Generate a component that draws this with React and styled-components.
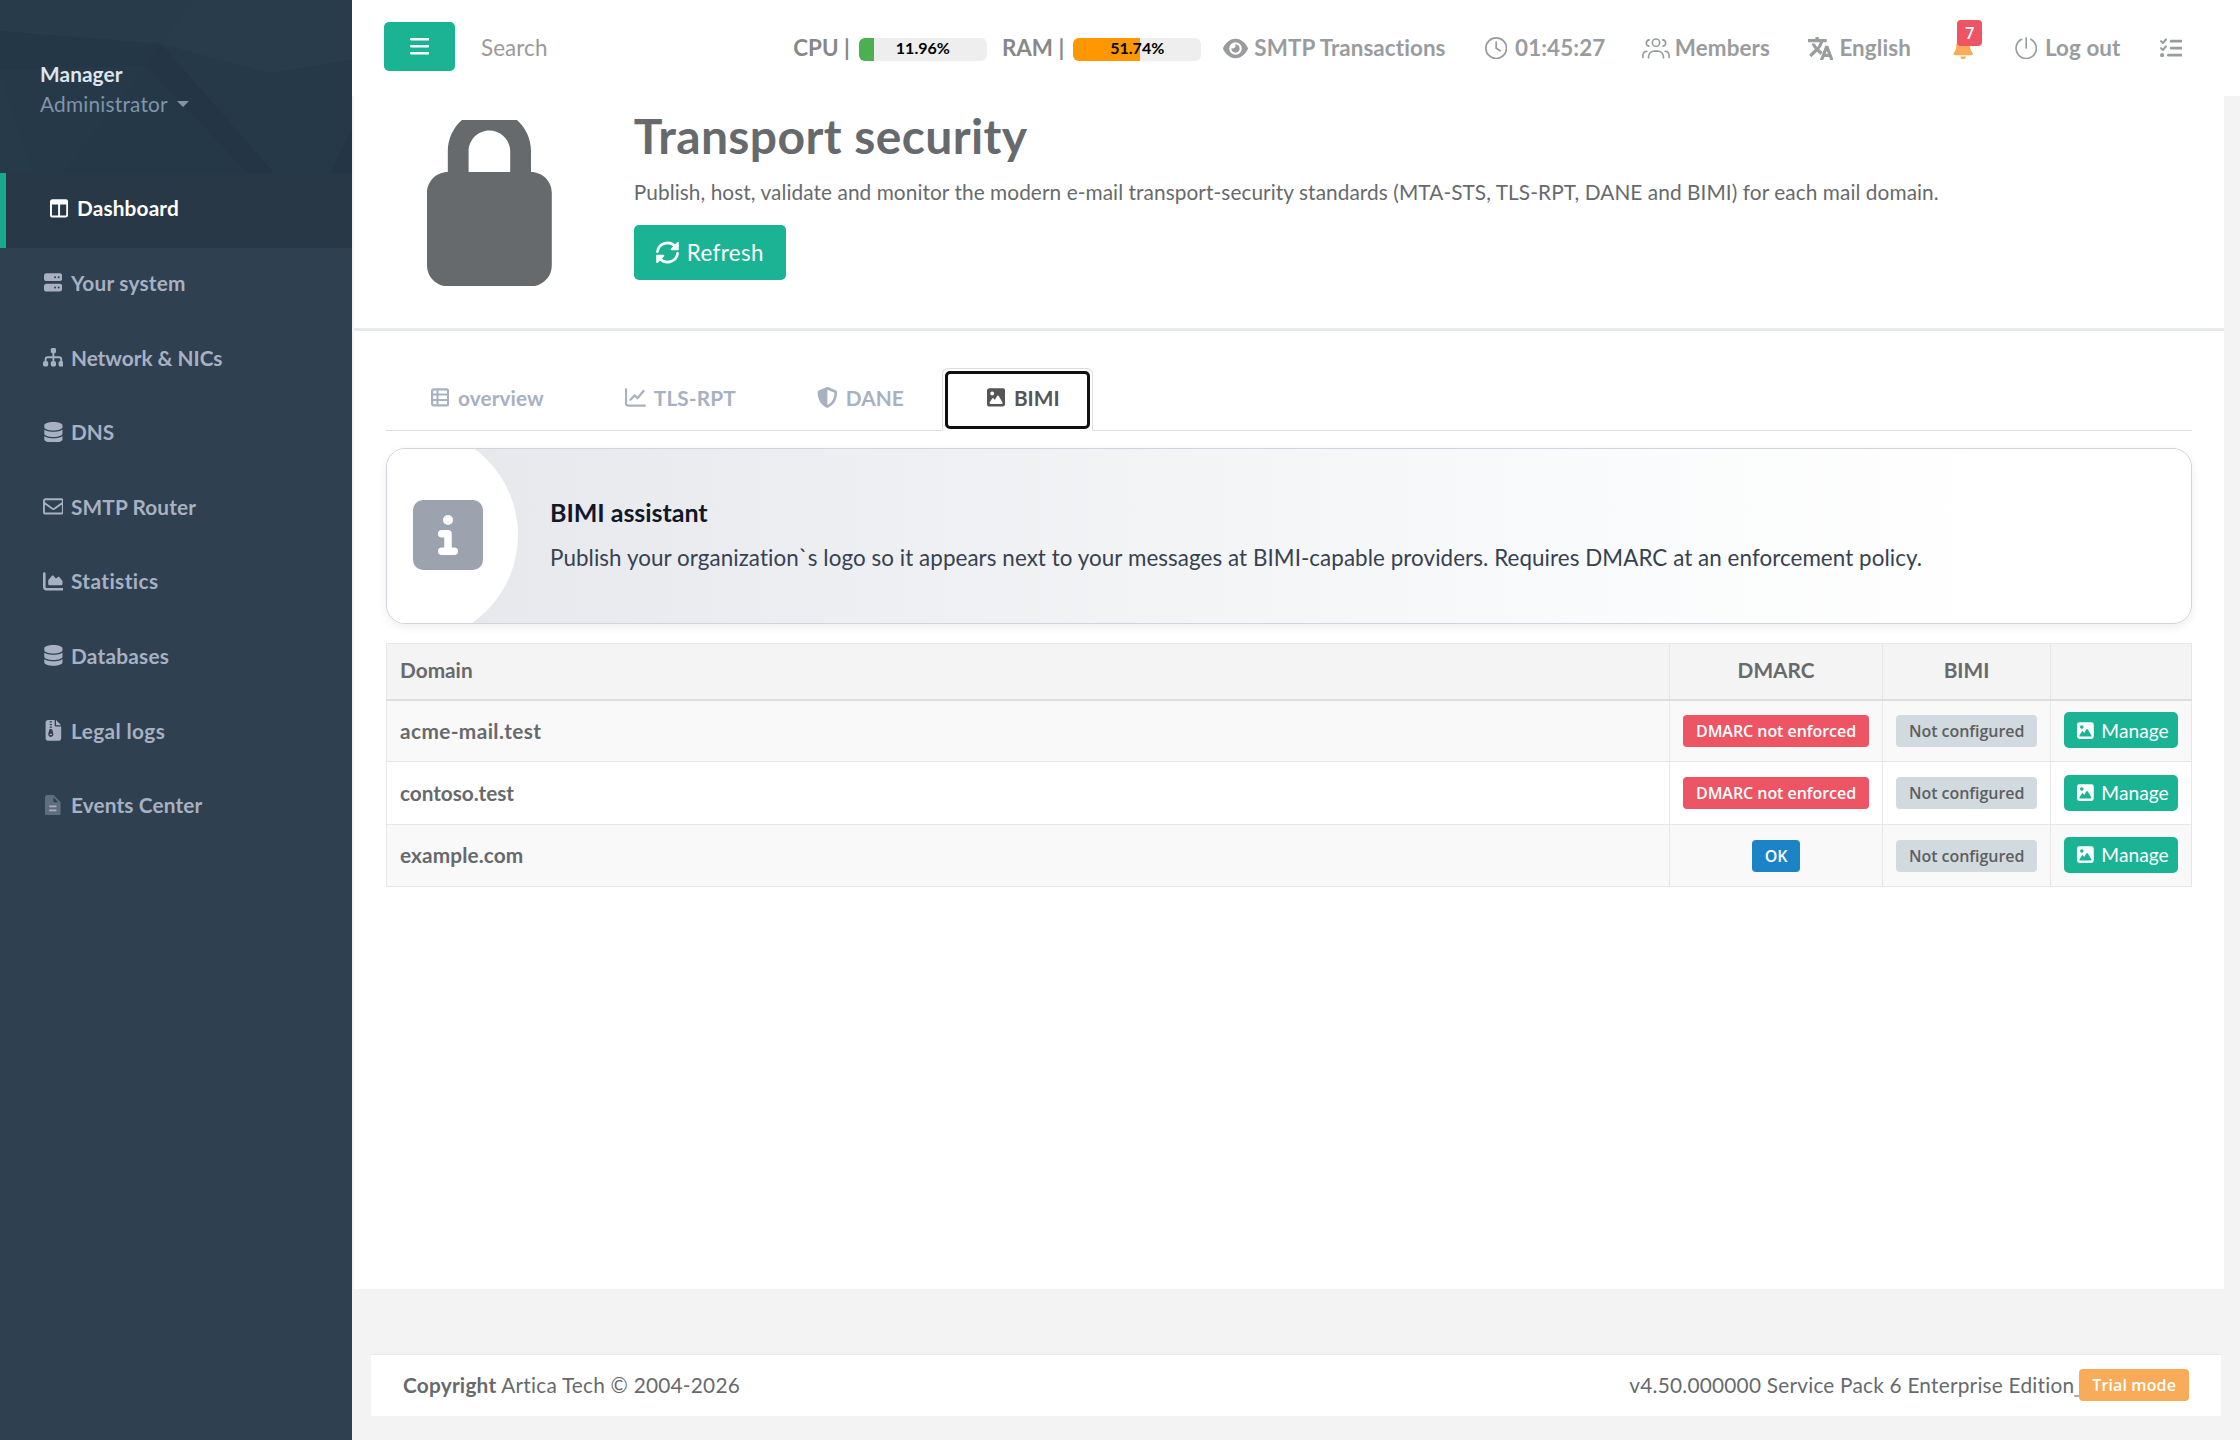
import React from 'react';
import styled, { createGlobalStyle } from 'styled-components';
import {
  FaBell,
  FaChartArea,
  FaDatabase,
  FaEye,
  FaFileZipper,
  FaListCheck,
  FaShieldHalved,
} from 'react-icons/fa6';

const GlobalStyle = createGlobalStyle`
  *, *::before, *::after {
    box-sizing: border-box;
  }

  body {
    margin: 0;
    background: #f3f3f3;
    color: #676a6c;
    font-family: Lato, "Open Sans", sans-serif;
    font-size: 20.8px;
    font-variant-ligatures: none;
    line-height: 1.42857;
  }
`;

const Page = styled.div`
  display: flex;
  width: 2240px;
  height: 1440px;
  overflow: hidden;
`;

/* ---------- sidebar ---------- */

const Sidebar = styled.nav`
  width: 352px;
  flex: none;
  background: #2f4050;
`;

const Profile = styled.div`
  position: relative;
  height: 173px;
  padding: 59px 40px 0;
  background: #263949;
`;

const ProfilePattern = styled.svg`
  position: absolute;
  inset: 0;
  width: 100%;
  height: 100%;
`;

const ProfileName = styled.div`
  position: relative;
  color: #dfe4ed;
  font-weight: 700;
  letter-spacing: 0.1px;
  line-height: 30px;
`;

const ProfileRole = styled.div`
  position: relative;
  display: flex;
  align-items: center;
  gap: 9px;
  color: #8095a8;
  letter-spacing: 0.22px;
  line-height: 30px;
`;

const Caret = styled.span`
  border-top: 6.4px solid currentColor;
  border-left: 6.4px solid transparent;
  border-right: 6.4px solid transparent;
`;

const NavItem = styled.a`
  display: flex;
  align-items: center;
  gap: 5px;
  height: 74.6px;
  padding: 0 0 4px 40px;
  border-left: ${(p) => (p.$active ? '6px solid #19aa8d' : 'none')};
  background: ${(p) => (p.$active ? '#293846' : 'transparent')};
  color: ${(p) => (p.$active ? '#fff' : '#a7b1c2')};
  font-weight: 700;
  letter-spacing: ${(p) => p.$tracking || 0}px;
`;

const IconBox = styled.span`
  display: inline-flex;
  flex: none;
  align-items: center;
  justify-content: center;
  width: 1.25em;
  height: 1em;
`;

/* ---------- top bar ---------- */

const Main = styled.div`
  flex: 1;
  min-width: 0;
  display: flex;
  flex-direction: column;
`;

const TopBar = styled.header`
  display: flex;
  align-items: center;
  height: 96px;
  flex: none;
  padding: 0 55px 0 32px;
  background: #fff;
  font-size: 22.4px;
`;

const MenuButton = styled.button`
  display: flex;
  align-items: center;
  justify-content: center;
  width: 71px;
  height: 49px;
  margin-top: -3px;
  padding: 0;
  border: 0;
  border-radius: 5px;
  background: #1ab394;
  color: #fff;
`;

const Search = styled.div`
  margin-left: 26px;
  color: #999;
  letter-spacing: 0.1px;
`;

const Meters = styled.div`
  display: flex;
  align-items: center;
  margin-left: auto;
  margin-right: 20px;
  color: #888;
  font-weight: 700;
`;

const MeterLabel = styled.span`
  margin-right: 9px;
`;

const Meter = styled.div`
  position: relative;
  width: 128px;
  height: 22.4px;
  margin-top: 3px;
  margin-right: ${(p) => (p.$last ? 0 : 15)}px;
  border-radius: 6px;
  background: #eee;
  overflow: hidden;
`;

const MeterFill = styled.div`
  height: 100%;
  background: ${(p) => p.$color};
`;

const MeterValue = styled.span`
  position: absolute;
  inset: 0;
  color: #000;
  font-size: 16px;
  font-weight: 700;
  line-height: 20px;
  text-align: center;
`;

const TopLinks = styled.div`
  display: flex;
  gap: 36.5px;
`;

const TopLink = styled.a`
  position: relative;
  display: flex;
  align-items: center;
  gap: 5px;
  color: ${(p) => p.$color || '#999c9e'};
  font-weight: 700;
  letter-spacing: 0.1px;
  white-space: nowrap;
`;

const AlertLink = styled(TopLink)`
  margin: 0 -2px 0 2px;
`;

const Count = styled.span`
  position: absolute;
  top: -12px;
  left: 8px;
  width: 25px;
  height: 26px;
  border-radius: 4px;
  background: #ed5565;
  color: #fff;
  font: 600 16px/26px "Open Sans", sans-serif;
  text-align: center;
`;

/* ---------- content ---------- */

const Content = styled.main`
  height: 1193px;
  flex: none;
  margin: 0 16px 0 2px;
  background: #fff;
`;

const Heading = styled.section`
  display: flex;
  height: 235px;
  padding: 24px 74px 0 73px;
  border-bottom: 3px solid #e7eaec;
`;

const LockIcon = styled.svg`
  width: 124.8px;
  height: 166.4px;
  margin-right: 82px;
  flex: none;
`;

const Title = styled.h1`
  margin: -18px 0 0;
  font-size: 48px;
  font-weight: 700;
  letter-spacing: 0.4px;
  line-height: 68px;
`;

const Lead = styled.p`
  margin: 7px 0 18px;
  letter-spacing: 0.075px;
  line-height: 30px;
`;

const Button = styled.button`
  display: inline-flex;
  align-items: center;
  gap: ${(p) => (p.$small ? 4 : 5)}px;
  height: ${(p) => (p.$small ? 36 : 55)}px;
  padding: ${(p) => (p.$small ? '0 9px' : '0 22px 0 20px')};
  border: 0;
  border-radius: 5px;
  background: #1ab394;
  color: #fff;
  font-family: inherit;
  font-size: ${(p) => (p.$small ? 19.2 : 22.4)}px;
  letter-spacing: ${(p) => (p.$small ? 0 : 0.35)}px;
  vertical-align: middle;
`;

const Body = styled.section`
  padding: 37px 32px 0;
`;

const Tabs = styled.div`
  display: flex;
  gap: 5px;
  height: 63px;
  border-bottom: 1px solid #ddd;
`;

const Tab = styled.a`
  position: relative;
  display: flex;
  align-items: center;
  gap: 5px;
  height: 63px;
  padding: 0 32px 4px 40px;
  border: 1px solid ${(p) => (p.$active ? '#ddd' : 'transparent')};
  border-bottom-color: ${(p) => (p.$active ? '#fff' : 'transparent')};
  border-radius: 6px 6px 0 0;
  color: ${(p) => (p.$active ? '#555' : '#a7b1c2')};
  font-weight: 700;
  letter-spacing: ${(p) => (p.$active ? 0 : 0.1)}px;

  /* keyboard focus ring */
  &::after {
    content: '';
    display: ${(p) => (p.$active ? 'block' : 'none')};
    position: absolute;
    inset: 2px 2px 1px;
    border: 3px solid #101010;
    border-radius: 5px;
  }
`;

const Notice = styled.div`
  position: relative;
  display: flex;
  align-items: center;
  height: 176px;
  margin-top: 17px;
  border: 1px solid #d1d5db;
  border-radius: 19px;
  background: linear-gradient(90deg, #e5e7eb, #f9fafb 65%, #fff 90%);
  box-shadow: 0 3px 10px rgba(0, 0, 0, 0.07);
  overflow: hidden;
`;

/* white disc, partly cut off by the card, that carries the icon */
const NoticeDisc = styled.div`
  display: flex;
  align-items: center;
  justify-content: flex-end;
  width: 214px;
  height: 214px;
  flex: none;
  margin: -2px 0 0 -83px;
  padding-right: 35px;
  border-radius: 50%;
  background: #fff;
`;

const NoticeText = styled.div`
  margin-left: 32px;
  color: #374151;
  font-size: 22.4px;
  letter-spacing: 0.065px;
`;

const NoticeTitle = styled.h4`
  margin: -2px 0 14px;
  color: #111827;
  font-size: 25px;
  font-weight: 700;
  letter-spacing: -0.05px;
  line-height: 32px;
`;

const Table = styled.table`
  width: 100%;
  margin-top: 19px;
  border-collapse: collapse;
  table-layout: fixed;
`;

const Th = styled.th`
  height: 56px;
  padding: 0 13px 2px;
  border: 1px solid #e7e7e7;
  border-bottom: 2px solid #ddd;
  background: #f4f4f4;
  font-weight: 700;
  text-align: ${(p) => p.$align || 'center'};
`;

const Td = styled.td`
  height: 62.4px;
  padding: 0 13px 1px;
  border: 1px solid #e7e7e7;
  font-weight: ${(p) => (p.$strong ? 700 : 400)};
  letter-spacing: ${(p) => p.$tracking || 0}px;
  text-align: ${(p) => p.$align || 'center'};
  white-space: nowrap;
`;

const Tr = styled.tr`
  background: #fff;

  &:nth-child(odd) {
    background: #f9f9f9;
  }
`;

const labelColors = {
  danger: ['#ed5565', '#fff'],
  plain: ['#d1dade', '#5e5e5e'],
  primary: ['#1c84c6', '#fff'],
  warning: ['#f8ac59', '#fff'],
};

const Label = styled.span`
  display: inline-block;
  padding: 0 13px;
  border-radius: 4px;
  background: ${(p) => labelColors[p.$kind][0]};
  color: ${(p) => labelColors[p.$kind][1]};
  font: 600 16px/32px "Open Sans", sans-serif;
  letter-spacing: ${(p) => p.$tracking || -0.05}px;
  vertical-align: middle;
`;

const Footer = styled.footer`
  display: flex;
  align-items: center;
  justify-content: space-between;
  height: 62px;
  flex: none;
  margin: 65px 19px 0;
  padding: 0 32px 2px;
  border-top: 1px solid #e7eaec;
  background: #fff;
  letter-spacing: 0.23px;
`;

const Version = styled.div`
  display: flex;
  align-items: center;
`;

const Underscore = styled.u`
  width: 5px;
  color: #aaa;
  white-space: pre;
`;

/* ---------- icons ---------- */

function Glyph({ w = 512, size = '1em', children }) {
  return (
    <svg viewBox={`0 0 ${w} 512`} height={size} fill="currentColor" stroke="none">
      {children}
    </svg>
  );
}

function Line({ d, width = 40 }) {
  return (
    <path d={d} fill="none" stroke="currentColor" strokeWidth={width} strokeLinecap="round" strokeLinejoin="round" />
  );
}

const BarsIcon = () => (
  <Glyph w={448} size="22.4px">
    <Line d="M28 96H420M28 256H420M28 416H420" width={60} />
  </Glyph>
);

const ColumnsIcon = () => (
  <Glyph w={448}>
    <path fillRule="evenodd" d="M64 32H384a64 64 0 0 1 64 64V416a64 64 0 0 1-64 64H64a64 64 0 0 1-64-64V96A64 64 0 0 1 64 32ZM48 160V416a16 16 0 0 0 16 16H200V160ZM248 160V432H384a16 16 0 0 0 16-16V160Z" />
  </Glyph>
);

const ServerIcon = () => (
  <Glyph w={448}>
    <path fillRule="evenodd" d="M64 32H384a64 64 0 0 1 64 64V160a64 64 0 0 1-64 64H64a64 64 0 0 1-64-64V96A64 64 0 0 1 64 32ZM272 104a24 24 0 1 0 0 48a24 24 0 1 0 0-48ZM360 104a24 24 0 1 0 0 48a24 24 0 1 0 0-48ZM64 288H384a64 64 0 0 1 64 64V416a64 64 0 0 1-64 64H64a64 64 0 0 1-64-64V352A64 64 0 0 1 64 288ZM272 360a24 24 0 1 0 0 48a24 24 0 1 0 0-48ZM360 360a24 24 0 1 0 0 48a24 24 0 1 0 0-48Z" />
  </Glyph>
);

const SitemapIcon = () => (
  <Glyph>
    <rect x="192" y="24" width="128" height="128" rx="36" />
    <rect x="0" y="352" width="128" height="128" rx="36" />
    <rect x="192" y="352" width="128" height="128" rx="36" />
    <rect x="384" y="352" width="128" height="128" rx="36" />
    <Line d="M256 140V360M64 360V300a48 48 0 0 1 48-48H400a48 48 0 0 1 48 48V360" width={46} />
  </Glyph>
);

const EnvelopeIcon = () => (
  <Glyph>
    <Line d="M64 80H448a40 40 0 0 1 40 40V392a40 40 0 0 1-40 40H64a40 40 0 0 1-40-40V120A40 40 0 0 1 64 80ZM28 166L224 310Q256 332 288 310L484 166" width={46} />
  </Glyph>
);

const FileLinesIcon = () => (
  <Glyph w={384}>
    <path opacity="0.4" fillRule="evenodd" d="M64 0H214L384 170V448a64 64 0 0 1-64 64H64a64 64 0 0 1-64-64V64A64 64 0 0 1 64 0ZM208 58V152a24 24 0 0 0 24 24H326Z" />
    <Line d="M120 280H264M120 376H264" width={44} />
  </Glyph>
);

const ClockIcon = () => (
  <Glyph>
    <circle cx="256" cy="256" r="236" fill="none" stroke="currentColor" strokeWidth="40" />
    <Line d="M256 116V256L346 316" />
  </Glyph>
);

const UsersIcon = () => (
  <Glyph w={640} size="22.4px">
    <circle cx="320" cy="130" r="84" fill="none" stroke="currentColor" strokeWidth="38" />
    <Line d="M150 476V452a130 130 0 0 1 130-130H360a130 130 0 0 1 130 130V476M166 64a74 74 0 0 0-8 146M474 64a74 74 0 0 1 8 146M20 470V430a104 104 0 0 1 92-104M620 470V430a104 104 0 0 0-92-104" width={38} />
  </Glyph>
);

const TranslateIcon = () => (
  <svg viewBox="1 2 22 20" width="25" height="23" fill="currentColor" stroke="currentColor" strokeWidth="0.9" strokeLinejoin="round">
    <path d="M12.870 15.070l-2.540-2.510.030-.030c1.740-1.940 2.980-4.170 3.710-6.530H17V4h-7V2H8v2H1v1.990h11.170C11.500 7.920 10.440 9.750 9 11.350 8.070 10.320 7.300 9.190 6.690 8h-2c.730 1.630 1.730 3.170 2.980 4.560l-5.090 5.020L4 19l5-5 3.110 3.110.760-2.040zM18.500 10h-2L12 22h2l1.120-3h4.750L21 22h2l-4.500-12zm-2.620 7l1.620-4.330L19.120 17h-3.240z" />
  </svg>
);

const PowerIcon = () => (
  <Glyph>
    <Line d="M256 20V250M152 52a232 232 0 1 0 208 0" width={38} />
  </Glyph>
);

const RefreshIcon = () => (
  <Glyph size="23px">
    <path d="M32 236A226 226 0 0 1 424 118M480 276A226 226 0 0 1 88 394" fill="none" stroke="currentColor" strokeWidth="60" strokeLinecap="round" />
    <path d="M488 24a20 20 0 0 1 20 20V184a20 20 0 0 1-20 20H346a20 20 0 0 1-14-34L470 30ZM24 488a20 20 0 0 1-20-20V328a20 20 0 0 1 20-20H166a20 20 0 0 1 14 34L42 482Z" />
  </Glyph>
);

const TableListIcon = () => (
  <Glyph w={448}>
    <rect x="26" y="58" width="396" height="396" rx="44" fill="none" stroke="currentColor" strokeWidth="56" />
    <path d="M26 184H422M26 320H422M160 58V454" fill="none" stroke="currentColor" strokeWidth="50" />
  </Glyph>
);

const ChartLineIcon = () => (
  <Glyph>
    <Line d="M24 56V400a56 56 0 0 0 56 56H488M136 312L232 208L312 272L456 100" width={56} />
  </Glyph>
);

const PortraitIcon = () => (
  <Glyph w={448}>
    <path fillRule="evenodd" d="M64 32H384a64 64 0 0 1 64 64V416a64 64 0 0 1-64 64H64a64 64 0 0 1-64-64V96A64 64 0 0 1 64 32ZM128 112a48 48 0 1 0 0 96a48 48 0 1 0 0-96ZM88 416H360a24 24 0 0 0 21-37L290 224a24 24 0 0 0-42 0L192 318L168 284a24 24 0 0 0-40 0L68 378A24 24 0 0 0 88 416Z" />
  </Glyph>
);

const InfoIcon = () => (
  <svg viewBox="0 32 448 448" width="70" height="70">
    <rect y="32" width="448" height="448" rx="64" fill="#9ca3af" />
    <circle cx="224" cy="160" r="32" fill="#fff" />
    <path d="M184 248H224V360M184 360H264" fill="none" stroke="#fff" strokeWidth="48" strokeLinecap="round" strokeLinejoin="round" />
  </svg>
);

/* ---------- data ---------- */

const menu = [
  { text: 'Dashboard', icon: <ColumnsIcon />, tracking: 0.15, active: true },
  { text: 'Your system', icon: <ServerIcon />, tracking: 0.22 },
  { text: 'Network & NICs', icon: <SitemapIcon />, tracking: -0.04 },
  { text: 'DNS', icon: <FaDatabase />, tracking: 0 },
  { text: 'SMTP Router', icon: <EnvelopeIcon />, tracking: 0.12 },
  { text: 'Statistics', icon: <FaChartArea />, tracking: 0.4 },
  { text: 'Databases', icon: <FaDatabase />, tracking: 0.25 },
  { text: 'Legal logs', icon: <FaFileZipper />, tracking: 0.4 },
  { text: 'Events Center', icon: <FileLinesIcon />, tracking: 0.13 },
];

const tabs = [
  { text: 'overview', icon: <TableListIcon /> },
  { text: 'TLS-RPT', icon: <ChartLineIcon /> },
  { text: 'DANE', icon: <FaShieldHalved /> },
  { text: 'BIMI', icon: <PortraitIcon />, active: true },
];

const domains = [
  { name: 'acme-mail.test', enforced: false, tracking: 0.4 },
  { name: 'contoso.test', enforced: false, tracking: -0.05 },
  { name: 'example.com', enforced: true, tracking: 0.12 },
];

function App() {
  return (
    <Page>
      <GlobalStyle />
      <Sidebar>
        <Profile>
          <ProfilePattern viewBox="0 0 352 173" preserveAspectRatio="none">
            <path d="M0 0H192L161 44L0 31Z" fill="#283b4a" />
            <path d="M192 0H352V60L270 73L161 44Z" fill="#293c4b" />
            <path d="M0 31L161 44L145 66L0 70Z" fill="#243747" />
            <path d="M161 44L274 173H248L145 66Z" fill="#243546" />
            <path d="M0 70L32 173H0Z" fill="#273a49" />
            <path d="M145 66L248 173H62Z" fill="#253848" />
            <path d="M352 130V173H330Z" fill="#243646" />
          </ProfilePattern>
          <ProfileName>Manager</ProfileName>
          <ProfileRole>
            Administrator <Caret />
          </ProfileRole>
        </Profile>
        {menu.map((item) => (
          <NavItem key={item.text} $active={item.active} $tracking={item.tracking}>
            <IconBox>{item.icon}</IconBox>
            {item.text}
          </NavItem>
        ))}
      </Sidebar>

      <Main>
        <TopBar>
          <MenuButton>
            <BarsIcon />
          </MenuButton>
          <Search>Search</Search>
          <Meters>
            <MeterLabel>CPU |</MeterLabel>
            <Meter>
              <MeterFill $color="#4caf50" style={{ width: '11.96%' }} />
              <MeterValue>11.96%</MeterValue>
            </Meter>
            <MeterLabel>RAM |</MeterLabel>
            <Meter $last>
              <MeterFill $color="#ff9800" style={{ width: '51.74%' }} />
              <MeterValue>51.74%</MeterValue>
            </Meter>
          </Meters>
          <TopLinks>
            <TopLink>
              <IconBox><FaEye size={25} /></IconBox>
              SMTP Transactions
            </TopLink>
            <TopLink>
              <IconBox><ClockIcon /></IconBox>
              01:45:27
            </TopLink>
            <TopLink>
              <IconBox><UsersIcon /></IconBox>
              Members
            </TopLink>
            <TopLink>
              <IconBox><TranslateIcon /></IconBox>
              English
            </TopLink>
            <AlertLink $color="#f8ac59">
              <IconBox><FaBell /></IconBox>
              <Count>7</Count>
            </AlertLink>
            <TopLink>
              <IconBox><PowerIcon /></IconBox>
              Log out
            </TopLink>
            <TopLink>
              <IconBox><FaListCheck /></IconBox>
            </TopLink>
          </TopLinks>
        </TopBar>

        <Content>
          <Heading>
            <LockIcon viewBox="0 0 384 512" fill="#676a6c">
              <path d="M128 96v64h128V96c0-35.300-28.700-64-64-64s-64 28.700-64 64zM64 160V96C64 25.300 121.300-32 192-32S320 25.300 320 96v64c35.300 0 64 28.700 64 64v224c0 35.300-28.700 64-64 64H64c-35.300 0-64-28.700-64-64V224c0-35.300 28.700-64 64-64z" />
            </LockIcon>
            <div>
              <Title>Transport security</Title>
              <Lead>
                Publish, host, validate and monitor the modern e-mail transport-security standards (MTA-STS, TLS-RPT,
                DANE and BIMI) for each mail domain.
              </Lead>
              <Button>
                <IconBox><RefreshIcon /></IconBox>
                Refresh
              </Button>
            </div>
          </Heading>

          <Body>
            <Tabs>
              {tabs.map((tab) => (
                <Tab key={tab.text} $active={tab.active}>
                  <IconBox>{tab.icon}</IconBox>
                  {tab.text}
                </Tab>
              ))}
            </Tabs>

            <Notice>
              <NoticeDisc>
                <InfoIcon />
              </NoticeDisc>
              <NoticeText>
                <NoticeTitle>BIMI assistant</NoticeTitle>
                Publish your organization`s logo so it appears next to your messages at BIMI-capable providers.
                Requires DMARC at an enforcement policy.
              </NoticeText>
            </Notice>

            <Table>
              <colgroup>
                <col />
                <col width="213" />
                <col width="168" />
                <col width="141" />
              </colgroup>
              <thead>
                <tr>
                  <Th $align="left">Domain</Th>
                  <Th>DMARC</Th>
                  <Th>BIMI</Th>
                  <Th />
                </tr>
              </thead>
              <tbody>
                {domains.map((domain) => (
                  <Tr key={domain.name}>
                    <Td $align="left" $strong $tracking={domain.tracking}>{domain.name}</Td>
                    <Td>
                      {domain.enforced ? (
                        <Label $kind="primary">OK</Label>
                      ) : (
                        <Label $kind="danger">DMARC not enforced</Label>
                      )}
                    </Td>
                    <Td>
                      <Label $kind="plain">Not configured</Label>
                    </Td>
                    <Td>
                      <Button $small>
                        <IconBox><PortraitIcon /></IconBox>
                        Manage
                      </Button>
                    </Td>
                  </Tr>
                ))}
              </tbody>
            </Table>
          </Body>
        </Content>

        <Footer>
          <div>
            <strong>Copyright</strong> Artica Tech © 2004-2026
          </div>
          <Version>
            v4.50.000000 Service Pack 6 Enterprise Edition
            <Underscore> </Underscore>
            <Label $kind="warning" $tracking={0.12}>Trial mode</Label>
          </Version>
        </Footer>
      </Main>
    </Page>
  );
}

export default App;
